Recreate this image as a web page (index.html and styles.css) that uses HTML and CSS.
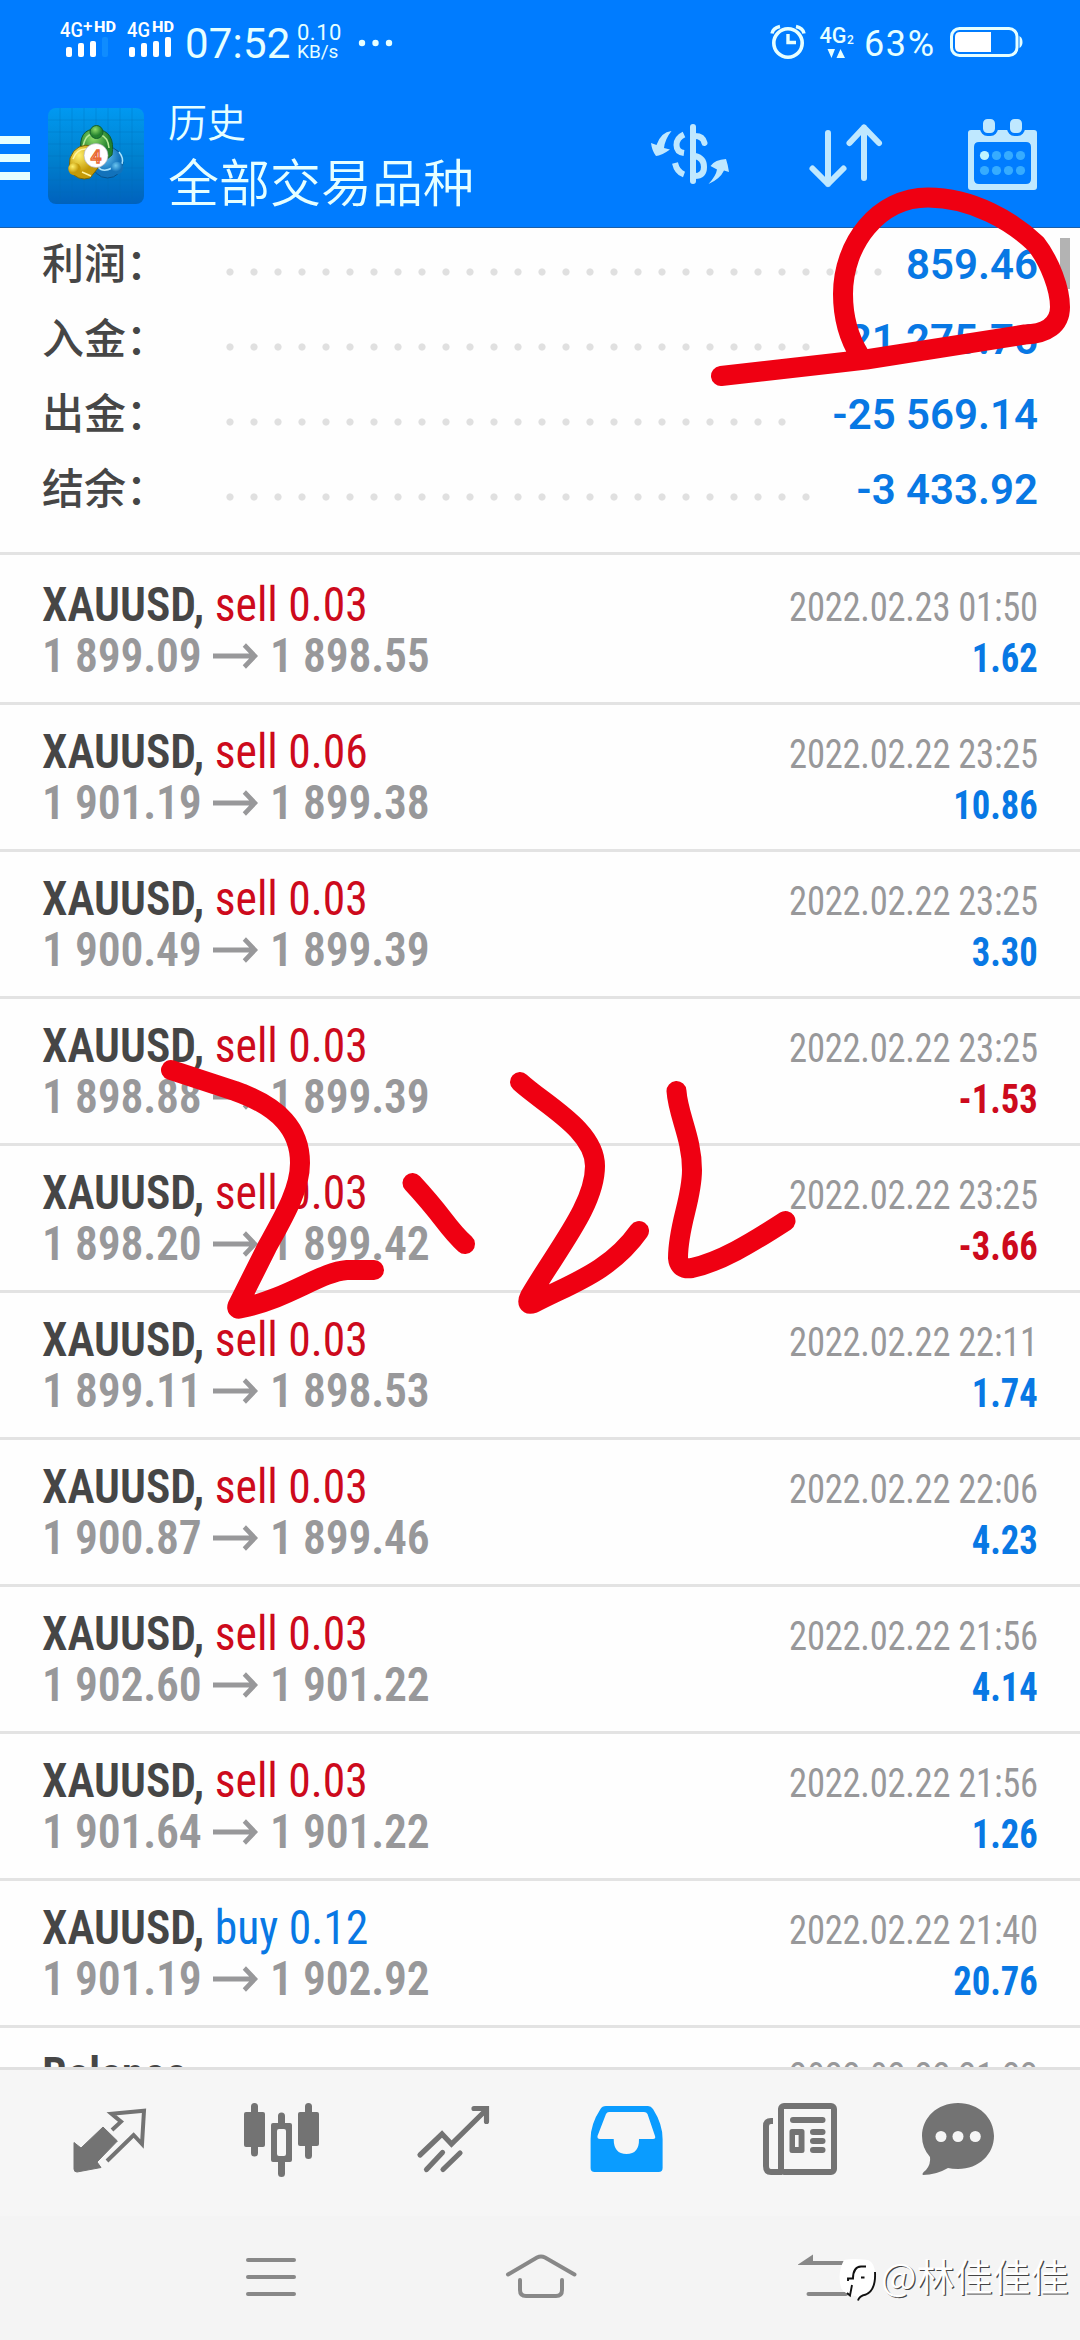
FILE: index.html
```html
<!DOCTYPE html>
<html lang="zh-CN">
<head>
<meta charset="utf-8">
<title>历史</title>
<link rel="stylesheet" href="styles.css">
</head>
<body>
<div class="screen">
  <header class="top">
    <div class="status">
      <svg class="signals" viewBox="58 14 118 50" width="118" height="50">
        <g fill="#fff" class="sig">
          <text x="60" y="37" font-size="20" textLength="23" lengthAdjust="spacingAndGlyphs">4G</text>
          <text x="83" y="32" font-size="17" textLength="10">+</text>
          <text x="94" y="32" font-size="14" textLength="22" lengthAdjust="spacingAndGlyphs" class="heavy">HD</text>
          <rect x="66" y="47" width="6" height="10" rx="2"/><rect x="78" y="43" width="6" height="14" rx="2"/><rect x="90" y="41" width="6" height="16" rx="2"/><rect x="102" y="37" width="6" height="20" rx="2" fill="#0f8cff"/>
          <text x="127" y="37" font-size="20" textLength="23" lengthAdjust="spacingAndGlyphs">4G</text>
          <text x="152" y="32" font-size="14" textLength="22" lengthAdjust="spacingAndGlyphs" class="heavy">HD</text>
          <rect x="129" y="47" width="6" height="10" rx="2"/><rect x="141" y="43" width="6" height="14" rx="2"/><rect x="153" y="41" width="6" height="16" rx="2"/><rect x="165" y="37" width="6" height="20" rx="2"/>
        </g>
      </svg>
      <span class="clock">07:52</span>
      <span class="speed"><span>0.10</span><span>KB/s</span></span>
      <svg class="more" viewBox="356 38 36 10" width="36" height="10"><g fill="#e6ffff"><circle cx="360" cy="43" r="3.2"/><circle cx="373.5" cy="43" r="3.2"/><circle cx="387" cy="43" r="3.2"/></g></svg>
      <svg class="alarm" viewBox="766 20 90 42" width="90" height="42">
        <g fill="none" stroke="#e6ffff" stroke-width="3.6"><circle cx="786" cy="43" r="14.2"/><path d="M786 34V42.500H794" stroke-width="3.400"/><path d="M770 33.500Q771 28 778 26.500M802 33.500Q801 28 794 26.500" stroke-width="3.500"/></g>
        <g fill="#e6ffff" class="sig"><text x="817.500" y="43" font-size="22" textLength="27" lengthAdjust="spacingAndGlyphs">4G</text><text x="845" y="44" font-size="12">2</text><path d="M825.500 49H833L829.500 58ZM834.500 58H843L838.500 49Z"/></g>
      </svg>
      <span class="percent">63%</span>
      <svg class="battery" viewBox="946 24 76 36" width="76" height="36"><rect x="949.500" y="28.500" width="65.500" height="27" rx="8" fill="none" stroke="#e6ffff" stroke-width="3"/><path d="M958 32H989V52H958Q953 52 953 47V37Q953 32 958 32Z" fill="#fff"/><path d="M1017.500 36Q1020.500 38 1020.500 42T1017.500 48Z" fill="#e6ffff"/></svg>
    </div>
    <div class="appbar">
      <svg class="menu" viewBox="0 132 30 52" width="30" height="52"><path d="M0 136H30V144H0ZM0 154H30V162H0ZM0 172H30V180H0Z" fill="#e6ffff"/></svg>
      <svg class="logo" viewBox="48 108 96 96" width="96" height="96">
        <defs>
          <linearGradient id="bg" x1="0" y1="0" x2="0" y2="1"><stop offset="0" stop-color="#0199f1"/><stop offset=".5" stop-color="#0082cf"/><stop offset="1" stop-color="#0062bd"/></linearGradient>
          <radialGradient id="gr" cx=".4" cy=".3"><stop offset="0" stop-color="#8fdc6a"/><stop offset="1" stop-color="#22812e"/></radialGradient>
          <radialGradient id="ye" cx=".35" cy=".3"><stop offset="0" stop-color="#fff06a"/><stop offset="1" stop-color="#c59a08"/></radialGradient>
          <radialGradient id="bl" cx=".4" cy=".3"><stop offset="0" stop-color="#6cc6f0"/><stop offset="1" stop-color="#1272bb"/></radialGradient>
        </defs>
        <rect x="48" y="108" width="96" height="96" rx="8" fill="url(#bg)"/>
        <path d="M60 108V204M72 108V204M84 108V204M96 108V204M108 108V204M120 108V204M132 108V204M48 120H144M48 132H144M48 144H144M48 156H144M48 168H144M48 180H144M48 192H144" stroke="#0069b5" stroke-opacity=".3"/>
        <circle cx="107.500" cy="162.500" r="15.500" fill="url(#bl)" stroke="#07518c"/>
        <path d="M98 167Q103 173 112 168M119 152Q124 158 122 164" stroke="#a7e3ff" stroke-width="1.500" fill="none"/>
        <path d="M81 152Q78 129 96 129Q116 131 112 155L106 160L87 151Z" fill="url(#gr)" stroke="#125c2b"/>
        <path d="M83 146Q86 134 92 134.500M100 134.500Q108 137 109 148" stroke="#b9eb9a" stroke-width="1.500" fill="none"/>
        <path d="M94 146Q76 142 70 158L69 170Q78 182 90 178L98 168Z" fill="url(#ye)" stroke="#73650c"/>
        <path d="M73 159Q77 148 87 149M82 172L91 176" stroke="#fff5a0" stroke-width="1.500" fill="none"/>
        <circle cx="96.500" cy="132" r="6.500" fill="url(#gr)" stroke="#13602c"/><circle cx="74.500" cy="169" r="6.200" fill="url(#ye)"/><circle cx="117" cy="168" r="6.200" fill="url(#bl)"/>
        <circle cx="96" cy="155.500" r="12" fill="#fff" stroke="#aab" stroke-width=".6"/>
        <text x="90.500" y="162.500" font-size="19" class="four">4</text>
      </svg>
      <div class="heading"><span class="sub">历史</span><span class="main">全部交易品种</span></div>
      <svg class="ic-currency" viewBox="648 120 84 68" width="84" height="68">
        <g fill="none" stroke="#bfe8ff" stroke-width="6"><path d="M693 127V181" stroke-linecap="round"/><path d="M695 136Q703 136 704.500 143" stroke-linecap="round"/><path d="M695 156Q704 158 704 167T695 176"/><path d="M684 134.500Q676.500 138 676.500 145T684 153"/><path d="M675 163Q677 172 684 174.500"/></g>
        <g fill="#bfe8ff"><path d="M671.500 131Q661 132 656.500 145L651 143Q652 151 656 156Q661 156 670 149.500L664 148Q665 139 671.500 131ZM708.500 184Q716 176 717 169.500L710.500 166Q715 159.500 726 159Q728 165 729 172L724 170.500Q720 179 708.500 184Z"/></g>
      </svg>
      <svg class="ic-sort" viewBox="806 120 80 70" width="80" height="70"><path d="M828 133V184M812.500 168.500L828 184L843.500 168.500M864 178V127.500M849.500 143L864 127.500L879 143" fill="none" stroke="#bfe8ff" stroke-width="6" stroke-linecap="round" stroke-linejoin="round"/></svg>
      <svg class="ic-cal" viewBox="966 116 74 76" width="74" height="76"><path fill-rule="evenodd" fill="#bfe8ff" d="M971 130H1034Q1037 130 1037 133V187Q1037 190 1034 190H971Q968 190 968 187V133Q968 130 971 130ZM979 142Q974 142 974 147V179Q974 184 979 184H1026Q1031 184 1031 179V147Q1031 142 1026 142Z"/><g fill="#bfe8ff" stroke="#007cff" stroke-width="3"><rect x="981.500" y="117.500" width="15" height="17" rx="6"/><rect x="1008.500" y="117.500" width="15" height="17" rx="6"/></g><circle cx="984.500" cy="155.500" r="4.600" fill="#bff4ff"/><g fill="#36acff"><circle cx="996.500" cy="155.500" r="4.600"/><circle cx="1008.500" cy="155.500" r="4.600"/><circle cx="1020.500" cy="155.500" r="4.600"/><circle cx="984.500" cy="170.500" r="4.600"/><circle cx="996.500" cy="170.500" r="4.600"/><circle cx="1008.500" cy="170.500" r="4.600"/><circle cx="1020.500" cy="170.500" r="4.600"/></g></svg>
    </div>
  </header>

  <main class="content">
    <section class="summary">
      <div class="sum"><span class="label">利润：</span><i class="dots" style="width:672px"></i><b>859.46</b></div>
      <div class="sum"><span class="label">入金：</span><i class="dots" style="width:600px"></i><b>21 275.76</b></div>
      <div class="sum"><span class="label">出金：</span><i class="dots" style="width:576px"></i><b>-25 569.14</b></div>
      <div class="sum"><span class="label">结余：</span><i class="dots" style="width:600px"></i><b>-3 433.92</b></div>
      <div class="scrollbar"></div>
    </section>
    <svg width="0" height="0" class="defs"><symbol id="arrow" viewBox="0 0 48 26"><path d="M0 13H44M33 2L44 13L33 24" fill="none" stroke="#98989a" stroke-width="4.800"/></symbol></svg>
    <section class="deals">
      <article class="deal"><div class="left"><p class="name">XAUUSD, <em>sell 0.03</em></p><p class="price"><span>1 899.09</span><svg><use href="#arrow"/></svg><span>1 898.55</span></p></div><div class="right"><time>2022.02.23 01:50</time><b>1.62</b></div></article>
      <article class="deal"><div class="left"><p class="name">XAUUSD, <em>sell 0.06</em></p><p class="price"><span>1 901.19</span><svg><use href="#arrow"/></svg><span>1 899.38</span></p></div><div class="right"><time>2022.02.22 23:25</time><b>10.86</b></div></article>
      <article class="deal"><div class="left"><p class="name">XAUUSD, <em>sell 0.03</em></p><p class="price"><span>1 900.49</span><svg><use href="#arrow"/></svg><span>1 899.39</span></p></div><div class="right"><time>2022.02.22 23:25</time><b>3.30</b></div></article>
      <article class="deal"><div class="left"><p class="name">XAUUSD, <em>sell 0.03</em></p><p class="price"><span>1 898.88</span><svg><use href="#arrow"/></svg><span>1 899.39</span></p></div><div class="right"><time>2022.02.22 23:25</time><b class="loss">-1.53</b></div></article>
      <article class="deal"><div class="left"><p class="name">XAUUSD, <em>sell 0.03</em></p><p class="price"><span>1 898.20</span><svg><use href="#arrow"/></svg><span>1 899.42</span></p></div><div class="right"><time>2022.02.22 23:25</time><b class="loss">-3.66</b></div></article>
      <article class="deal"><div class="left"><p class="name">XAUUSD, <em>sell 0.03</em></p><p class="price"><span>1 899.11</span><svg><use href="#arrow"/></svg><span>1 898.53</span></p></div><div class="right"><time>2022.02.22 22:11</time><b>1.74</b></div></article>
      <article class="deal"><div class="left"><p class="name">XAUUSD, <em>sell 0.03</em></p><p class="price"><span>1 900.87</span><svg><use href="#arrow"/></svg><span>1 899.46</span></p></div><div class="right"><time>2022.02.22 22:06</time><b>4.23</b></div></article>
      <article class="deal"><div class="left"><p class="name">XAUUSD, <em>sell 0.03</em></p><p class="price"><span>1 902.60</span><svg><use href="#arrow"/></svg><span>1 901.22</span></p></div><div class="right"><time>2022.02.22 21:56</time><b>4.14</b></div></article>
      <article class="deal"><div class="left"><p class="name">XAUUSD, <em>sell 0.03</em></p><p class="price"><span>1 901.64</span><svg><use href="#arrow"/></svg><span>1 901.22</span></p></div><div class="right"><time>2022.02.22 21:56</time><b>1.26</b></div></article>
      <article class="deal"><div class="left"><p class="name">XAUUSD, <em class="buy">buy 0.12</em></p><p class="price"><span>1 901.19</span><svg><use href="#arrow"/></svg><span>1 902.92</span></p></div><div class="right"><time>2022.02.22 21:40</time><b>20.76</b></div></article>
      <article class="deal"><div class="left"><p class="name">Balance</p></div><div class="right"><time>2022.02.22 21:23</time></div></article>
    </section>
  </main>

  <nav class="tabs">
    <svg viewBox="64 2096 92 88" fill="#737373"><path d="M103 2127L117.400 2141L97 2162L101 2167.500L77 2172Q74 2172 74 2169V2142.500L81 2148Z" stroke="#737373" stroke-linejoin="round"/><path d="M112 2130L121 2121.700L111.500 2113.800L144 2110.700L142 2144L133.600 2135L107 2161" fill="none" stroke="#737373" stroke-width="4"/></svg>
    <svg viewBox="236 2096 92 88" fill="#737373"><rect x="244" y="2112" width="21" height="35" rx="2"/><rect x="298" y="2112" width="21" height="34" rx="2"/><path fill-rule="evenodd" d="M273 2123H290Q292 2123 292 2125V2160Q292 2162 290 2162H273Q271 2162 271 2160V2125Q271 2123 273 2123ZM279 2129Q277 2129 277 2131V2154Q277 2156 279 2156H284Q286 2156 286 2154V2131Q286 2129 284 2129Z"/><path d="M254.500 2106.500V2153M308.500 2106.500V2155.500M281.500 2116V2124M281.500 2161V2173.500" stroke="#737373" stroke-width="7" stroke-linecap="round"/></svg>
    <svg viewBox="408 2096 92 88"><path d="M420 2155L442 2134L451.500 2144L486 2110M474 2108.500H486.500V2121.500M426.500 2169.500L442.500 2152.500M443 2169.500L460 2153" fill="none" stroke="#737373" stroke-width="5.200" stroke-linecap="round"/></svg>
    <svg viewBox="580 2096 92 88"><path fill="#0a9cff" fill-rule="evenodd" d="M606 2106H648Q651 2106 653 2109Q662.600 2124 662.600 2139V2168Q662.600 2172 658.600 2172H594.600Q590.600 2172 590.600 2168V2139Q590.600 2124 600.500 2109Q602 2106 606 2106ZM609 2112Q607 2112 606 2114L597.500 2136Q597 2139 600 2139H613.700Q613.700 2154 626.500 2154T639 2139H653Q656 2139 655 2136L647.500 2114Q646.500 2112 644 2112Z"/></svg>
    <svg viewBox="754 2096 92 88" fill="#737373"><rect x="781" y="2106" width="53" height="66" rx="3" fill="none" stroke="#737373" stroke-width="6"/><path d="M773 2121H771Q766 2121 766 2126V2166Q766 2172 771 2172H782" fill="none" stroke="#737373" stroke-width="6"/><rect x="790" y="2117" width="35.500" height="6" rx="3"/><path fill-rule="evenodd" d="M792 2129H802Q804.500 2129 804.500 2131.500V2150.500Q804.500 2153 802 2153H792Q789.500 2153 789.500 2150.500V2131.500Q789.500 2129 792 2129ZM795 2135V2147H798.600V2135Z"/><rect x="810" y="2129" width="15.500" height="6" rx="3"/><rect x="810" y="2138" width="15.500" height="6" rx="3"/><rect x="810" y="2147" width="15.500" height="6" rx="3"/></svg>
    <svg viewBox="912 2096 92 88"><path fill="#737373" d="M958 2103C979 2103 994 2118 994 2136S979 2169 958 2169Q952 2169 948 2168Q936 2175 923 2175Q921 2174 926 2170Q931 2164 930 2157Q922 2148 922 2136C922 2118 937 2103 958 2103Z"/><g fill="#f6f6f6"><circle cx="941" cy="2136.500" r="5.500"/><circle cx="958" cy="2136.500" r="5.500"/><circle cx="975.300" cy="2136.500" r="5.500"/></g></svg>
  </nav>
  <footer class="sysnav">
    <svg viewBox="240 2250 62 52" width="62" height="52"><path d="M248 2260H294M248 2277H294M248 2294H294"/></svg>
    <svg class="home" viewBox="504 2250 74 52" width="74" height="52"><path d="M508 2274.500L537 2257.500Q541 2255.500 545 2257.500L574.500 2274.500M520 2280V2290Q520 2296 526 2296H556Q562 2296 562 2290V2280"/></svg>
    <svg class="back" viewBox="796 2250 64 52" width="64" height="52"><path d="M812 2263H846M808.500 2294H846"/><path d="M798 2264.500L813 2254.500V2265H798Z" class="tip"/></svg>
  </footer>

  <div class="watermark">
    <svg viewBox="838 2256 40 50" width="40" height="50"><path d="M844 2262Q852 2260 868 2262Q875 2265 875 2276Q875 2291 867 2296L858 2301L856 2298Q845 2297 841 2290Q837 2275 844 2262Z" fill="#fff"/><path d="M848 2283V2280.500H853Q853 2269 861 2268.500H866M861 2279.500H864.500M847 2295L850 2297.500L852 2287M858 2302.500Q859 2298 866 2296.500Q876 2292 875 2274" fill="none" stroke="#111" stroke-width="1.900"/></svg>
    <span>@林佳佳佳</span>
  </div>
  <svg class="marker" viewBox="0 0 1080 2340"><path d="M721 376L840 362.500L866 359.500L1025 334.500C1046 334 1060 325 1060 307C1060 289 1050 262 1036 244C1013 222 973 197.500 928 197.500C878 197.500 843 244 843 294C843 320 850 340 860 356M171 1070L235 1091C280 1107 300 1130 300 1163C300 1190 283 1218 267 1247L237.500 1306Q236 1310 242 1308C290 1298 320 1272 347 1270H374M412.500 1183Q430 1202 443 1219T465 1244M520 1082C545 1105 595 1130 595 1166C595 1205 558 1248 530 1296Q525 1306 534 1303C570 1284 610 1272 639 1231M676.500 1091C678 1115 692 1138 692 1170C692 1200 678 1225 678 1258Q679 1270 692 1268C720 1262 750 1244 785.500 1221"/></svg>
</div>
</body>
</html>
```
FILE: styles.css
```css
* { box-sizing: border-box; margin: 0; padding: 0; }
body { width: 1080px; height: 2340px; overflow: hidden; background: #fff; font-family: Roboto, "Noto Sans CJK SC", sans-serif; }
svg { display: block; flex: none; }
.screen { position: relative; display: flex; flex-direction: column; width: 1080px; height: 2340px; overflow: hidden; }

.top { height: 228px; background: #007cff; border-bottom: 1px solid #1c5fa8; color: #e6ffff; }
.status { display: flex; height: 84px; padding-left: 58px; }
.signals { margin-top: 14px; }
.sig { font-family: Roboto, sans-serif; font-weight: 500; }
.heavy { font-weight: 800; }
.clock { width: 111px; padding-left: 9px; margin-top: 20px; font-size: 42px; line-height: 48px; letter-spacing: .2px; white-space: nowrap; }
.speed { display: flex; flex-direction: column; width: 71px; padding-left: 10px; margin-top: 22px; }
.speed span { font-size: 22px; line-height: 21px; letter-spacing: .5px; }
.speed span + span { font-size: 19px; line-height: 18px; letter-spacing: 0; }
.more { margin-top: 38px; }
.alarm { margin: 20px 0 0 374px; }
.percent { width: 90px; padding-left: 6px; margin-top: 24px; font-size: 36px; line-height: 40px; letter-spacing: 1.6px; }
.battery { margin-top: 24px; }
.appbar { display: flex; height: 143px; }
.menu { margin-top: 48px; }
.logo { margin: 24px 0 0 18px; }
.four { font-family: Roboto, sans-serif; font-weight: 500; fill: #fff; stroke: #e96a35; stroke-width: 1.4px; }
.heading { display: flex; flex-direction: column; width: 504px; padding: 9px 0 0 24px; font-family: "Noto Sans CJK SC", sans-serif; }
.sub { font-size: 39px; line-height: 54px; font-weight: 350; }
.main { font-size: 51px; line-height: 66px; font-weight: 350; }
.ic-currency { margin-top: 36px; }
.ic-sort { margin: 36px 0 0 74px; }
.ic-cal { margin: 32px 0 0 80px; }

.content { height: 1839px; overflow: hidden; background: #fefefe; }
.summary { position: relative; height: 327px; border-bottom: 3px solid #e3e3e3; }
.sum { display: flex; height: 75px; padding: 0 42px; line-height: 74px; font-size: 42px; white-space: nowrap; }
.label { width: 176px; color: #464646; font: 500 42px/66px "Noto Sans CJK SC", sans-serif; }
.dots { height: 75px; background: radial-gradient(circle at 12px 44px, #e0e0e0 3.2px, transparent 4px) 0 0 / 24px 75px; }
.sum b { margin-left: auto; font-weight: 600; color: #0878e4; }
.scrollbar { position: absolute; right: 10px; top: 10px; width: 10px; height: 51px; background: #b3b3b3; }

.defs { position: absolute; }
.deals { padding-top: 3px; font-stretch: condensed; font-family: "Roboto Condensed", Roboto, sans-serif; }
.deal { display: flex; justify-content: space-between; height: 147px; padding: 21px 42px; border-bottom: 3px solid #e3e3e3; line-height: 51px; white-space: nowrap; }
.left { transform: scaleX(.95); transform-origin: left; }
.name { font-size: 48px; font-weight: 600; color: #464646; }
.name em { font-style: normal; font-weight: 400; color: #cd0a1c; }
.name .buy { color: #0878e4; }
.price { display: flex; font-size: 48px; font-weight: 600; letter-spacing: -.2px; color: #98989a; }
.price svg { width: 48px; height: 26px; margin: 13px 12px 0; }
.right { display: flex; flex-direction: column; align-items: flex-end; padding-top: 3px; font-size: 40px; transform: scaleX(.915); transform-origin: right; }
.right time { letter-spacing: -.3px; color: #98989a; }
.right b { font-weight: 700; color: #0878e4; }
.right .loss { color: #cd0a1c; }

.tabs { display: flex; height: 149px; padding: 26px 0 0 64px; gap: 80px; border-top: 3px solid #e0e0e0; background: #f6f6f6; }
.tabs svg { width: 92px; height: 88px; }
.tabs svg:nth-child(5) { margin: 0 -14px 0 2px; }
.sysnav { display: flex; height: 124px; padding: 34px 0 0 240px; background: #f4f4f4; fill: none; stroke: #888; stroke-width: 4px; stroke-linecap: round; }
.home { margin-left: 202px; }
.back { margin-left: 218px; }
.tip { fill: #888; stroke: none; }

.watermark { position: absolute; left: 838px; top: 2254px; display: flex; font: 350 38px/46px "Noto Sans CJK SC", sans-serif; color: #fff; text-shadow: 1.2px 1.2px .4px #444; }
.watermark span { padding-left: 3px; margin-top: -2px; white-space: nowrap; }
.marker { position: absolute; left: 0; top: 0; width: 1080px; height: 2340px; fill: none; stroke: #ef0012; stroke-width: 20px; stroke-linecap: round; stroke-linejoin: round; }
```
